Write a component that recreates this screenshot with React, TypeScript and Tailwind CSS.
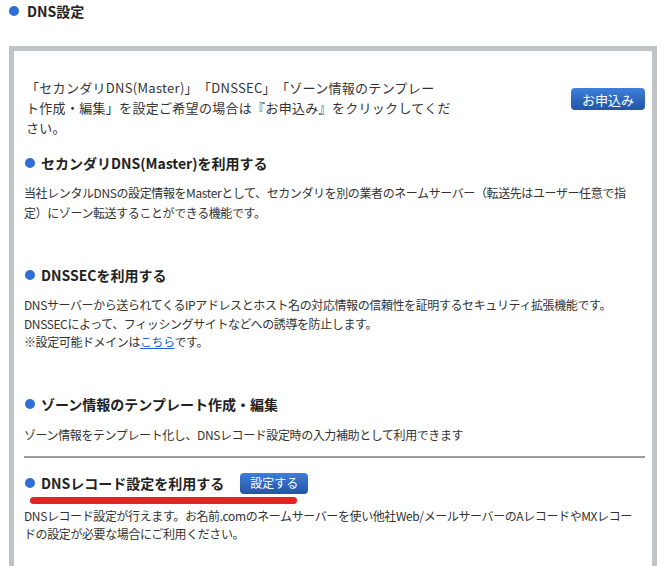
const font = { fontFamily: '"Noto Sans CJK JP", "Noto Sans", sans-serif' };

function Dot({ className = '' }: { className?: string }) {
  return <span className={`inline-block w-[10px] h-[10px] rounded-full bg-[#2f6fd8] shrink-0 ${className}`} />;
}

function Heading({ children }: { children: React.ReactNode }) {
  return (
    <div className="flex items-center gap-[6px] h-[20px] pl-[1px]">
      <Dot />
      <span className="text-[14px] font-bold text-[#222] leading-[20px]">{children}</span>
    </div>
  );
}

function BlueButton({ label, className = '' }: { label: string; className?: string }) {
  return (
    <button
      className={`flex items-center justify-center rounded-[4px] bg-gradient-to-b from-[#3d7fdc] to-[#2454a6] text-white leading-none ${className}`}
    >
      {label}
    </button>
  );
}

export default function App() {
  return (
    <div className="min-h-screen bg-white text-[#333]" style={font}>
      <div className="flex items-center gap-[8px] pl-[9px] pt-[1px] h-[21px]">
        <Dot />
        <span className="text-[14px] font-bold text-[#222] leading-[20px]">DNS設定</span>
      </div>

      <div className="ml-[9px] mr-[4px] mt-[25px] border-[5px] border-b-0 border-[#c1c4c7] pl-[10px] pr-[7px] pt-[27px] pb-[60px]">
        <div className="flex items-start justify-between pl-[2px]">
          <p className="text-[13px] leading-[20px] tracking-[0.3px] whitespace-nowrap text-[#333] [text-spacing-trim:space-all]">
            「セカンダリDNS(Master)」「DNSSEC」「ゾーン情報のテンプレー
            <br />
            ト作成・編集」を設定ご希望の場合は『お申込み』をクリックしてくだ
            <br />
            さい。
          </p>
          <BlueButton label="お申込み" className="mt-[10px] w-[74px] h-[22px] text-[13px]" />
        </div>

        <div className="mt-[15px]">
          <Heading>セカンダリDNS(Master)を利用する</Heading>
          <p className="mt-[10px] text-[12px] leading-[20px] tracking-[-0.4px] whitespace-nowrap">
            当社レンタルDNSの設定情報をMasterとして、セカンダリを別の業者のネームサーバー（転送先はユーザー任意で指
            <br />
            定）にゾーン転送することができる機能です。
          </p>
        </div>

        <div className="mt-[42px]">
          <Heading>DNSSECを利用する</Heading>
          <p className="mt-[11px] text-[12px] leading-[18.5px] tracking-[-0.4px] whitespace-nowrap">
            DNSサーバーから送られてくるIPアドレスとホスト名の対応情報の信頼性を証明するセキュリティ拡張機能です。
            <br />
            DNSSECによって、フィッシングサイトなどへの誘導を防止します。
            <br />
            ※設定可能ドメインは
            <a href="#" className="text-[#1a5fd0] underline">
              こちら
            </a>
            です。
          </p>
        </div>

        <div className="mt-[42px]">
          <Heading>ゾーン情報のテンプレート作成・編集</Heading>
          <p className="mt-[11px] text-[12px] leading-[19px] tracking-[-0.4px] whitespace-nowrap">
            ゾーン情報をテンプレート化し、DNSレコード設定時の入力補助として利用できます
          </p>
        </div>

        <div className="mt-[12px] h-[2px] bg-[#9a9c9e]" />

        <div className="mt-[15px] flex items-center h-[21px]">
          <Heading>DNSレコード設定を利用する</Heading>
          <BlueButton label="設定する" className="ml-[16px] w-[68px] h-[21px] text-[12px]" />
        </div>
        <div className="mt-[3px] ml-[6px] w-[267px] h-[7px] rounded-full bg-[#e42222]" />
        <p className="mt-[3px] text-[12px] leading-[18px] tracking-[-0.4px] whitespace-nowrap">
          DNSレコード設定が行えます。お名前.comのネームサーバーを使い他社Web/メールサーバーのAレコードやMXレコー
          <br />
          ドの設定が必要な場合にご利用ください。
        </p>
      </div>
    </div>
  );
}
